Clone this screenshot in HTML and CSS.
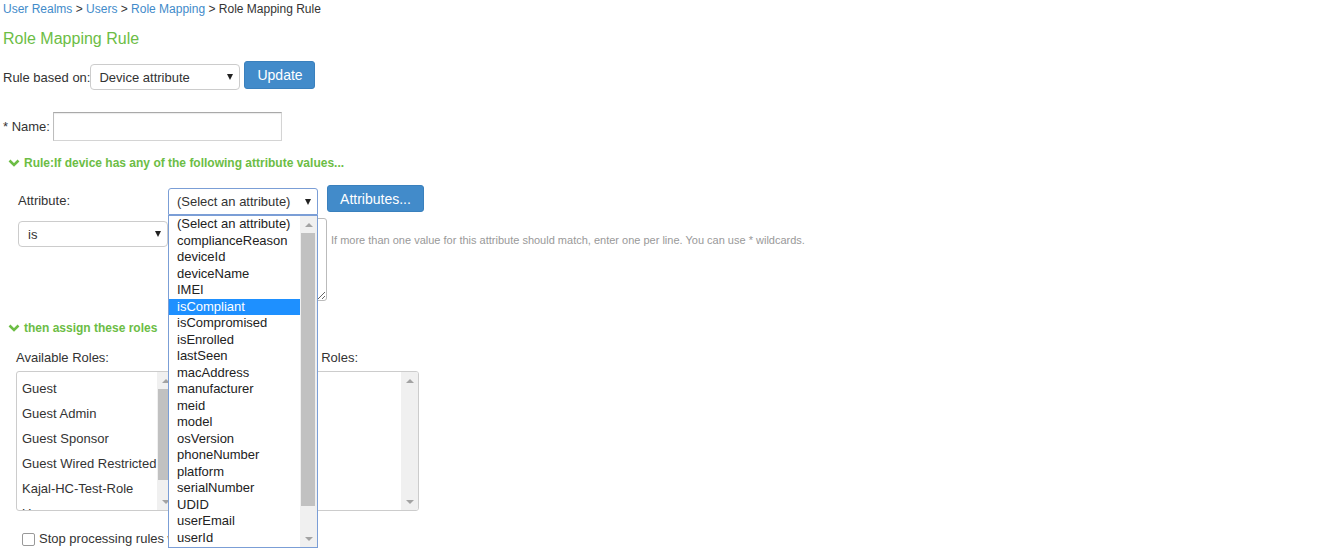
FILE: index.html
```html
<!DOCTYPE html>
<html lang="en">
  <head>
    <meta charset="UTF-8" />
    <meta name="viewport" content="width=device-width, initial-scale=1.0" />
    <title>Role Mapping Rule</title>
    <link rel="stylesheet" href="styles.css">
  </head>
  <body>
    <div class="breadcrumb">
      <a href="#">User Realms</a> &gt; <a href="#">Users</a> &gt;
      <a href="#">Role Mapping</a> &gt; Role Mapping Rule
    </div>
    <h1 class="page-title">Role Mapping Rule</h1>

    <div class="based-row">
      <label for="ruleType" class="based-label">Rule based on:</label>
      <span class="select-wrap based-select">
        <select id="ruleType"><option>Device attribute</option></select>
      </span>
      <button class="btn update-btn">Update</button>
    </div>

    <div class="name-row">
      <label for="ruleName" class="name-label">* Name:</label>
      <input type="text" id="ruleName" class="name-input" />
    </div>

    <div class="section-head rule-head">
      <svg class="chevron" width="12" height="8" viewBox="0 0 12 8">
        <polyline points="1.5,1.5 6,6 10.5,1.5" fill="none" stroke="#6cbd45" stroke-width="2.6" />
      </svg>
      Rule:If device has any of the following attribute values...
    </div>

    <div class="attr-row">
      <label class="attr-label" for="attrSelect">Attribute:</label>
      <span class="select-wrap attr-select">
        <select id="attrSelect" class="focused"><option>(Select an attribute)</option></select>

        <!-- open native dropdown -->
        <div class="dropdown">
          <ul class="dropdown-items">
            <li>(Select an attribute)</li>
            <li>complianceReason</li>
            <li>deviceId</li>
            <li>deviceName</li>
            <li>IMEI</li>
            <li class="active">isCompliant</li>
            <li>isCompromised</li>
            <li>isEnrolled</li>
            <li>lastSeen</li>
            <li>macAddress</li>
            <li>manufacturer</li>
            <li>meid</li>
            <li>model</li>
            <li>osVersion</li>
            <li>phoneNumber</li>
            <li>platform</li>
            <li>serialNumber</li>
            <li>UDID</li>
            <li>userEmail</li>
            <li>userId</li>
          </ul>
          <div class="scrollbar">
            <span class="sb-btn"><i class="arrow-up"></i></span>
            <span class="sb-thumb dd-thumb"></span>
            <span class="sb-track"></span>
            <span class="sb-btn"><i class="arrow-down"></i></span>
          </div>
        </div>
      </span>
      <button class="btn attr-btn">Attributes...</button>
    </div>

    <div class="value-row">
      <span class="select-wrap op-select">
        <select><option>is</option><option>is not</option></select>
      </span>
      <textarea class="values"></textarea>
      <span class="help">If more than one value for this attribute should match, enter one per line. You can use * wildcards.</span>
    </div>

    <div class="section-head roles-head">
      <svg class="chevron" width="12" height="8" viewBox="0 0 12 8">
        <polyline points="1.5,1.5 6,6 10.5,1.5" fill="none" stroke="#6cbd45" stroke-width="2.6" />
      </svg>
      then assign these roles
    </div>

    <div class="roles">
      <div class="roles-col available">
        <div class="col-label">Available Roles:</div>
        <div class="listbox">
          <ul class="list-items">
            <li>Guest</li>
            <li>Guest Admin</li>
            <li>Guest Sponsor</li>
            <li>Guest Wired Restricted</li>
            <li>Kajal-HC-Test-Role</li>
            <li>Users</li>
          </ul>
          <div class="scrollbar">
            <span class="sb-btn"><i class="arrow-up"></i></span>
            <span class="sb-thumb roles-thumb"></span>
            <span class="sb-track"></span>
            <span class="sb-btn"><i class="arrow-down"></i></span>
          </div>
        </div>
      </div>
      <div class="roles-middle"></div>
      <div class="roles-col selected">
        <div class="col-label">Selected Roles:</div>
        <div class="listbox">
          <ul class="list-items"></ul>
          <div class="scrollbar">
            <span class="sb-btn"><i class="arrow-up"></i></span>
            <span class="sb-track"></span>
            <span class="sb-btn"><i class="arrow-down"></i></span>
          </div>
        </div>
      </div>
    </div>

    <div class="stop-row">
      <input type="checkbox" id="stopRules" class="check" />
      <label for="stopRules">Stop processing rules when this rule matches</label>
    </div>
  </body>
</html>
```

FILE: styles.css
```css
body {
  margin: 0;
  font-family: "Liberation Sans", Arial, sans-serif;
  font-size: 13px;
  color: #333;
  background: #fff;
}

ul {
  list-style: none;
  margin: 0;
  padding: 0;
}

.breadcrumb {
  font-size: 12px;
  line-height: 18px;
  padding: 0 3px;
}

.breadcrumb a {
  color: #428bca;
  text-decoration: none;
}

.page-title {
  margin: 11px 0 0;
  padding: 0 3px;
  font-size: 16px;
  line-height: 20px;
  font-weight: normal;
  color: #6cbd45;
}

/* selects with the little black arrow */
.select-wrap {
  position: relative;
  display: inline-block;
}

.select-wrap select {
  appearance: none;
  -webkit-appearance: none;
  width: 100%;
  height: 100%;
  box-sizing: border-box;
  border: 1px solid #ccc;
  border-radius: 4px;
  background: #fff;
  padding: 0 20px 0 8px;
  font-family: "Liberation Sans", Arial, sans-serif;
  font-size: 13px;
  color: #333;
  outline: none;
}

.select-wrap::after {
  content: "";
  position: absolute;
  right: 7px;
  top: 50%;
  margin-top: -3px;
  border-left: 3.5px solid transparent;
  border-right: 3.5px solid transparent;
  border-top: 6px solid #222;
}

.select-wrap select.focused {
  border-color: #7b9ed6;
  border-radius: 3px 3px 0 0;
}

.btn {
  background-color: #428bca;
  border: 1px solid #3a80bd;
  border-radius: 3px;
  color: #fff;
  font-family: "Liberation Sans", Arial, sans-serif;
  font-size: 14px;
  padding: 0 12px;
  cursor: pointer;
}

.based-row {
  display: flex;
  align-items: flex-start;
  margin-top: 12px;
  padding-left: 3px;
}

.based-label {
  line-height: 25px;
  margin-top: 4px;
}

.based-select {
  width: 150px;
  height: 26px;
  margin-top: 3px;
}

.update-btn {
  height: 28px;
  width: 71px;
  margin-left: 4px;
}

.name-row {
  display: flex;
  margin-top: 22px;
  padding-left: 3px;
}

.name-label {
  line-height: 29px;
  width: 50px;
}

.name-input {
  width: 229px;
  height: 29px;
  box-sizing: border-box;
  border: 1px solid #d4d4d4;
  border-top-color: #a9a9a9;
  border-left-color: #bdbdbd;
  box-shadow: inset 0 1px 1px rgba(0, 0, 0, 0.08);
  margin: 0;
}

.section-head {
  display: flex;
  align-items: center;
  padding-left: 8px;
  font-size: 12px;
  line-height: 14px;
  font-weight: bold;
  color: #6cbd45;
}

.chevron {
  margin-right: 4px;
}

.rule-head {
  margin-top: 15px;
}

.attr-row {
  display: flex;
  align-items: flex-start;
  margin-top: 15px;
  padding-left: 18px;
}

.attr-label {
  width: 150px;
  line-height: 24px;
  margin-top: 4px;
}

.attr-select {
  width: 150px;
  height: 27px;
  margin-top: 3px;
}

.attr-btn {
  height: 27px;
  width: 97px;
  margin-left: 9px;
}

/* the open list of the attribute select */
.dropdown {
  position: absolute;
  top: 100%;
  left: 0;
  z-index: 5;
  width: 150px;
  height: 333px;
  box-sizing: border-box;
  border: 1px solid #7b9ed6;
  background: #fff;
  display: flex;
}

.dropdown-items {
  flex: 1;
  font-size: 13px;
  color: #222;
  overflow: hidden;
}

.dropdown-items li {
  height: 16.5px;
  line-height: 16.5px;
  padding-left: 8px;
  white-space: nowrap;
}

.dropdown-items li.active {
  background: #1e90ff;
  color: #fff;
}

.scrollbar {
  width: 17px;
  background: #f0f0f0;
  display: flex;
  flex-direction: column;
}

.sb-btn {
  height: 17px;
  display: flex;
  align-items: center;
  justify-content: center;
}

.sb-track {
  flex: 1;
}

.sb-thumb {
  background: #c1c1c1;
  margin: 0 2px 0 1px;
}

.dd-thumb {
  height: 273px;
}

.roles-thumb {
  height: 91px;
}

.arrow-up {
  border-left: 4px solid transparent;
  border-right: 4px solid transparent;
  border-bottom: 4px solid #a3a3a3;
}

.arrow-down {
  border-left: 4px solid transparent;
  border-right: 4px solid transparent;
  border-top: 4px solid #a3a3a3;
}

.value-row {
  display: flex;
  align-items: flex-start;
  margin-top: 3px;
  padding-left: 18px;
}

.op-select {
  width: 150px;
  height: 26px;
  margin-top: 3px;
}

.op-select select {
  padding-left: 9px;
}

.values {
  width: 152px;
  height: 83px;
  box-sizing: border-box;
  margin: 0 0 0 7px;
  border: 1px solid #bbb;
  border-radius: 3px;
}

.help {
  margin: 15px 0 0 4px;
  font-size: 11px;
  line-height: 14px;
  color: #999;
}

.roles-head {
  margin-top: 20px;
}

.roles {
  display: flex;
  margin-top: 15px;
  padding-left: 16px;
}

.col-label {
  line-height: 16px;
  margin-bottom: 5px;
}

.available {
  width: 159px;
}

.selected {
  width: 152px;
}

.roles-middle {
  width: 92px;
}

.listbox {
  display: flex;
  height: 140px;
  box-sizing: border-box;
  border: 1px solid #ccc;
  border-radius: 3px;
  overflow: hidden;
}

.list-items {
  flex: 1;
  overflow: hidden;
  padding: 4px 0 0 5px;
  font-size: 13px;
}

.list-items li {
  line-height: 25px;
  white-space: nowrap;
}

.stop-row {
  display: flex;
  align-items: center;
  margin-top: 19px;
  padding-left: 22px;
  line-height: 18px;
}

.check {
  appearance: none;
  -webkit-appearance: none;
  width: 13px;
  height: 13px;
  margin: 0 4px 0 0;
  border: 1px solid #999;
  border-radius: 2px;
  background: #fff;
}
```
